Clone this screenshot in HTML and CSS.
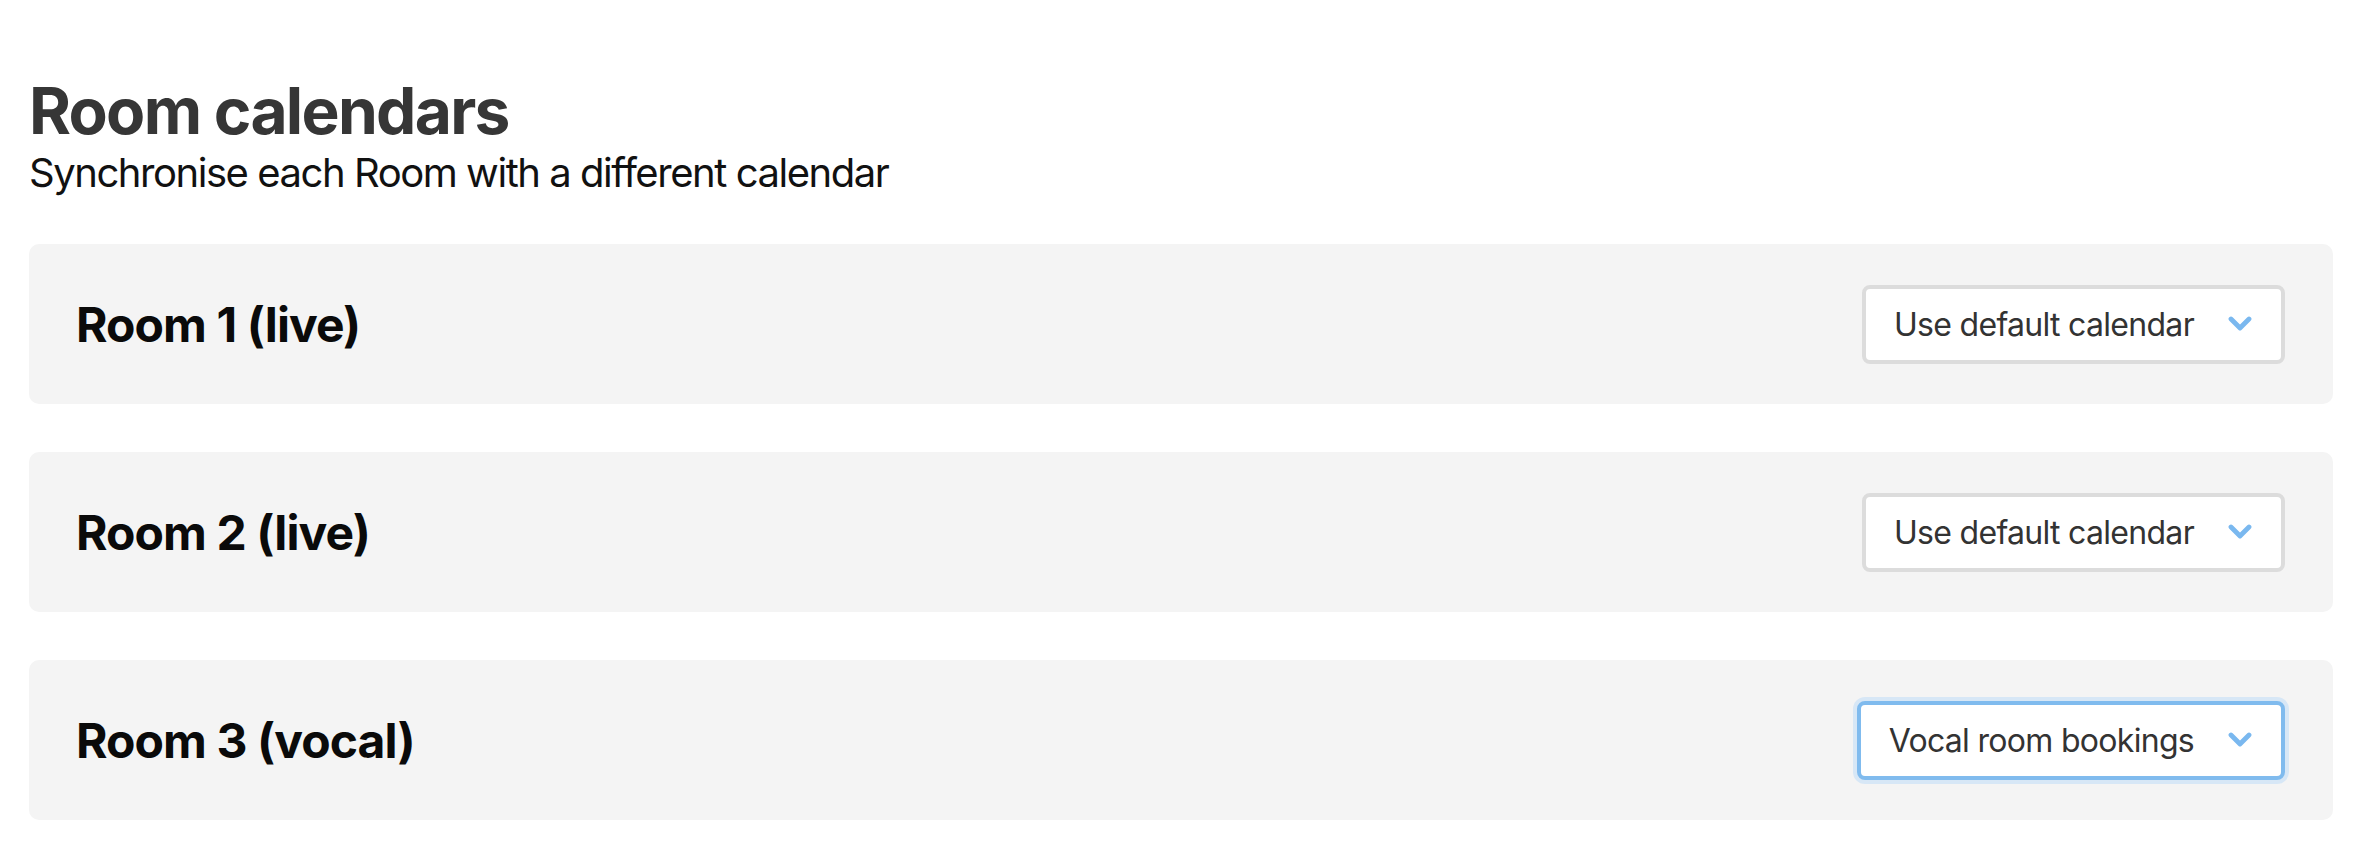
FILE: index.html
```html
<!DOCTYPE html>
<html lang="en">
<head>
<meta charset="utf-8">
<title>Room calendars</title>
<link rel="stylesheet" href="styles.css">
</head>
<body>
<header class="page-header">
  <h1 class="page-title">Room calendars</h1>
  <p class="page-subtitle">Synchronise each Room with a different calendar</p>
</header>
<main class="room-list">
  <section class="room-card">
    <h2 class="room-name">Room 1 (live)</h2>
    <div class="select">
      <span class="select-value">Use default calendar</span>
      <svg class="chevron" width="24" height="16" viewBox="0 0 24 16" aria-hidden="true"><path d="M3 3 L12 12 L21 3" fill="none" stroke="currentColor" stroke-width="4.8" stroke-linecap="round" stroke-linejoin="round"/></svg>
    </div>
  </section>
  <section class="room-card">
    <h2 class="room-name">Room 2 (live)</h2>
    <div class="select">
      <span class="select-value">Use default calendar</span>
      <svg class="chevron" width="24" height="16" viewBox="0 0 24 16" aria-hidden="true"><path d="M3 3 L12 12 L21 3" fill="none" stroke="currentColor" stroke-width="4.8" stroke-linecap="round" stroke-linejoin="round"/></svg>
    </div>
  </section>
  <section class="room-card">
    <h2 class="room-name">Room 3 (vocal)</h2>
    <div class="select select--focused">
      <span class="select-value">Vocal room bookings</span>
      <svg class="chevron" width="24" height="16" viewBox="0 0 24 16" aria-hidden="true"><path d="M3 3 L12 12 L21 3" fill="none" stroke="currentColor" stroke-width="4.8" stroke-linecap="round" stroke-linejoin="round"/></svg>
    </div>
  </section>
</main>
</body>
</html>
```
FILE: styles.css
```css
* { box-sizing: border-box; }

html, body { background: #ffffff; }

body {
  margin: 0;
  padding: 73px 35px 0 29px;
  font-family: Inter, "Noto Sans", "Liberation Sans", sans-serif;
}

.page-title {
  margin: 0;
  font-size: 64px;
  line-height: 76px;
  font-weight: 700;
  color: #363636;
  letter-spacing: -1.7px;
}

.page-subtitle {
  margin: 0 0 47px;
  font-size: 40px;
  line-height: 48px;
  font-weight: 400;
  color: #111111;
  letter-spacing: -1.45px;
}

.room-list {
  display: flex;
  flex-direction: column;
  gap: 48px;
}

.room-card {
  height: 160px;
  background: #f4f4f4;
  border-radius: 10px;
  padding: 0 48px 0 47px;
  display: flex;
  align-items: center;
  justify-content: space-between;
}

.room-name {
  margin: 0;
  font-size: 48px;
  font-weight: 700;
  color: #0a0a0a;
  letter-spacing: -0.9px;
}

.select {
  height: 79px;
  display: flex;
  align-items: center;
  gap: 34px;
  padding: 0 29px 0 28px;
  background: #ffffff;
  border: 4px solid #dcdcdc;
  border-radius: 8px;
  color: #333333;
  font-size: 32px;
  letter-spacing: -0.7px;
}

.select--focused {
  border-color: #80bbee;
  box-shadow: 0 0 0 4px #d7e7f6;
}

.select-value { white-space: nowrap; }

.chevron {
  display: block;
  color: #7ab8ef;
  flex: none;
}
```
